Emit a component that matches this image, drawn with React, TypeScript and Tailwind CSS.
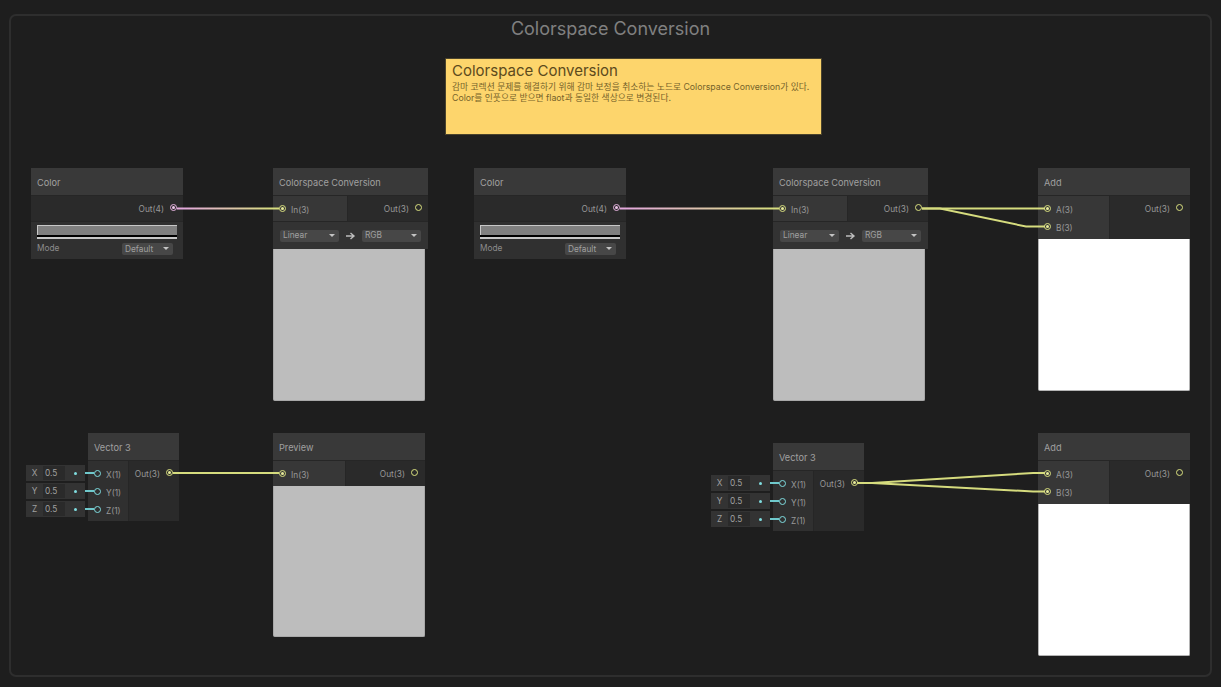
import React from 'react';

const FONT = 'font-["Inter","Noto_Sans_CJK_KR",sans-serif]';

function Port({ color, filled }: { color: 'yellow' | 'pink' | 'cyan'; filled?: boolean }) {
    const ring = color === 'yellow' ? 'border-[#d9e07f]' : color === 'pink' ? 'border-[#e6b3e0]' : 'border-[#7fdde0]';
    const dot = color === 'yellow' ? 'bg-[#e8ec9a]' : color === 'pink' ? 'bg-[#efc4ea]' : 'bg-[#7fdde0]';
    return (
        <span className={`flex h-[7px] w-[7px] shrink-0 items-center justify-center rounded-full border ${ring}`}>
            {filled && <span className={`h-[3px] w-[3px] rounded-full ${dot}`} />}
        </span>
    );
}

function Header({ title }: { title: string }) {
    return (
        <div className="flex h-[28px] items-center border-b border-[#262626] bg-[#393939] pl-[6px] pt-[2px] text-[9.2px] text-[#a0a0a0]">
            {title}
        </div>
    );
}

function InRow({ label, filled = true }: { label: string; filled?: boolean }) {
    return (
        <div className="flex h-[18px] items-center gap-[5px] pl-[6px] text-[8.3px] text-[#989898]">
            <Port color="yellow" filled={filled} />
            <span className="pt-[4px]">{label}</span>
        </div>
    );
}

function OutRow({ label, color = 'yellow', filled }: { label: string; color?: 'yellow' | 'pink'; filled?: boolean }) {
    return (
        <div className="flex h-[24px] items-center justify-end gap-[6px] pr-[6px] pb-[1px] text-[8.3px] text-[#989898]">
            <span className="pt-[4px]">{label}</span>
            <Port color={color} filled={filled} />
        </div>
    );
}

function Dropdown({ label, className }: { label: string; className: string }) {
    return (
        <div className={`flex h-[12px] items-center justify-between rounded-[2px] bg-[#474747] pl-[3px] pr-[4px] text-[8.3px] text-[#a0a0a0] ${className}`}>
            <span>{label}</span>
            <span className="h-0 w-0 border-x-[3px] border-t-[3px] border-x-transparent border-t-[#c4c4c4]" />
        </div>
    );
}

function ColorNode({ className }: { className: string }) {
    return (
        <div className={`absolute w-[152px] ${className}`}>
            <Header title="Color" />
            <div className="h-[25px] bg-[#2a2a2a]">
                <OutRow label="Out(4)" color="pink" filled />
            </div>
            <div className="h-[38px] border-t border-[#262626] bg-[#303030] px-[6px] pt-[3px]">
                <div className="flex h-[14px] flex-col border-t border-[#c8c8c8]">
                    <div className="h-[9px] border-l border-[#c8c8c8] bg-[#808080]" />
                    <div className="h-[2px] bg-black" />
                    <div className="h-[2px] bg-[#c8c8c8]" />
                </div>
                <div className="mt-[3px] flex items-center justify-between pr-[4px] text-[8.3px] text-[#8c8c8c]">
                    <span className="pb-[1px]">Mode</span>
                    <Dropdown label="Default" className="w-[51px]" />
                </div>
            </div>
        </div>
    );
}

function ConversionNode({ className }: { className: string }) {
    return (
        <div className={`absolute ${className}`}>
            <div className="w-[155px]">
                <Header title="Colorspace Conversion" />
                <div className="flex h-[25px] bg-[#2a2a2a]">
                    <div className="w-[74px] bg-[#373737] pt-[3px]">
                        <InRow label="In(3)" />
                    </div>
                    <div className="flex-1 border-l border-[#262626]">
                        <OutRow label="Out(3)" />
                    </div>
                </div>
                <div className="flex h-[28px] items-center gap-[4px] border-t border-[#262626] bg-[#333333] pl-[7px]">
                    <Dropdown label="Linear" className="w-[59px]" />
                    <svg width="14" height="10" viewBox="0 0 14 10" fill="none" stroke="#bdbdbd" strokeWidth="1.4">
                        <path d="M3 5h8M7.5 2l3.5 3-3.5 3" />
                    </svg>
                    <Dropdown label="RGB" className="ml-[1px] w-[59px]" />
                </div>
            </div>
            <div className="h-[152px] w-[152px] rounded-b-[2px] border-x border-b border-[#a8a8a8] bg-[#bdbdbd]" />
        </div>
    );
}

function PreviewNode({ className }: { className: string }) {
    return (
        <div className={`absolute w-[152px] ${className}`}>
            <Header title="Preview" />
            <div className="flex h-[25px] bg-[#2a2a2a]">
                <div className="w-[72px] bg-[#373737] pt-[3px]">
                    <InRow label="In(3)" />
                </div>
                <div className="flex-1 border-l border-[#262626] pr-[1px]">
                    <OutRow label="Out(3)" />
                </div>
            </div>
            <div className="h-[151px] rounded-b-[2px] border-x border-b border-[#a8a8a8] bg-[#bdbdbd]" />
        </div>
    );
}

function AddNode({ className }: { className: string }) {
    return (
        <div className={`absolute w-[152px] ${className}`}>
            <Header title="Add" />
            <div className="flex h-[43px] bg-[#2a2a2a]">
                <div className="w-[71px] bg-[#373737] pt-[3px]">
                    <InRow label="A(3)" />
                    <InRow label="B(3)" />
                </div>
                <div className="flex-1 border-l border-[#262626] pr-[1px]">
                    <OutRow label="Out(3)" />
                </div>
            </div>
            <div className="h-[152px] rounded-b-[2px] border-x border-b border-[#b4b4b4] bg-white" />
        </div>
    );
}

function VectorNode({ className }: { className: string }) {
    return (
        <div className={`absolute w-[91px] ${className}`}>
            <Header title="Vector 3" />
            <div className="flex h-[60px] bg-[#2a2a2a]">
                <div className="w-[40px] bg-[#303030] pt-[3px]">
                    {['X(1)', 'Y(1)', 'Z(1)'].map((label) => (
                        <div key={label} className="flex h-[18px] items-center gap-[5px] pl-[6px] text-[8.3px] text-[#989898]">
                            <Port color="cyan" />
                            <span className="pt-[4px]">{label}</span>
                        </div>
                    ))}
                </div>
                <div className="flex-1 border-l border-[#262626]">
                    <OutRow label="Out(3)" filled />
                </div>
            </div>
        </div>
    );
}

function InlineFields({ className }: { className: string }) {
    return (
        <div className={`absolute flex w-[59px] flex-col gap-[2px] ${className}`}>
            {['X', 'Y', 'Z'].map((axis) => (
                <div key={axis} className="flex h-[16px] items-center bg-[#333333] text-[8.3px] text-[#a0a0a0]">
                    <span className="w-[17px] text-center">{axis}</span>
                    <span className="flex h-[14px] w-[22px] items-center bg-[#2a2a2a] pl-[2px]">0.5</span>
                    <span className="flex h-[16px] flex-1 items-center justify-center">
                        <span className="ml-[1px] h-[3px] w-[3px] rounded-full bg-[#7fdde0]" />
                    </span>
                </div>
            ))}
        </div>
    );
}

function Wires() {
    return (
        <svg className="pointer-events-none absolute left-0 top-0" width="1221" height="687" fill="none" strokeWidth="2">
            <defs>
                <linearGradient id="wireA" gradientUnits="userSpaceOnUse" x1="183" y1="0" x2="273" y2="0">
                    <stop offset="0" stopColor="#e3a9dc" />
                    <stop offset="1" stopColor="#d6dc7e" />
                </linearGradient>
                <linearGradient id="wireB" gradientUnits="userSpaceOnUse" x1="626" y1="0" x2="773" y2="0">
                    <stop offset="0" stopColor="#e3a9dc" />
                    <stop offset="1" stopColor="#d6dc7e" />
                </linearGradient>
            </defs>
            <path d="M177 208.5H279" stroke="url(#wireA)" />
            <path d="M620 208.5H779" stroke="url(#wireB)" />
            <g stroke="#d6dc7e">
                <path d="M173 473H279" />
                <path d="M922 208.5H1045" />
                <path d="M922 208.5H940L1026 226.5H1045" />
                <path d="M857 483H872L1033 473H1045" />
                <path d="M857 483H872L1033 491.5H1045" />
            </g>
            <g stroke="#6fc9cc">
                <path d="M85 473H94M85 491H94M85 509H94" />
                <path d="M770 483H779M770 501H779M770 519H779" />
            </g>
        </svg>
    );
}

export default function App() {
    return (
        <div className={`relative h-[687px] w-full overflow-hidden bg-[#1e1e1e] pl-[9px] pr-[9px] pt-[14px] ${FONT}`}>
            <div className="h-[663px] rounded-[7px] border-2 border-[#2e2e2e] pt-[1px] text-center text-[18px] leading-[24px] text-[#808080]">
                Colorspace Conversion
            </div>

            <div className="absolute left-[445px] top-[58px] h-[77px] w-[377px] rounded-[1px] border border-[#4a432c] bg-[#fdd56c] px-[6px] pt-[3px] text-[#75622a]">
                <div className="text-[15px] leading-[18px] text-[#5c4a1c]">Colorspace Conversion</div>
                <div className="pt-[2px] text-[8.75px] leading-[11px]">감마 코렉션 문제를 해결하기 위해 감마 보정을 취소하는 노드로 Colorspace Conversion가 있다.</div>
                <div className="text-[8.75px] leading-[11px]">Color를 인풋으로 받으면 flaot과 동일한 색상으로 변경된다.</div>
            </div>

            <ColorNode className="left-[31px] top-[168px]" />
            <ConversionNode className="left-[273px] top-[168px]" />
            <ColorNode className="left-[474px] top-[168px]" />
            <ConversionNode className="left-[773px] top-[168px]" />
            <AddNode className="left-[1038px] top-[168px]" />

            <InlineFields className="left-[26px] top-[465px]" />
            <VectorNode className="left-[88px] top-[433px]" />
            <PreviewNode className="left-[273px] top-[433px]" />

            <InlineFields className="left-[711px] top-[475px]" />
            <VectorNode className="left-[773px] top-[443px]" />
            <AddNode className="left-[1038px] top-[433px]" />

            <Wires />
        </div>
    );
}
